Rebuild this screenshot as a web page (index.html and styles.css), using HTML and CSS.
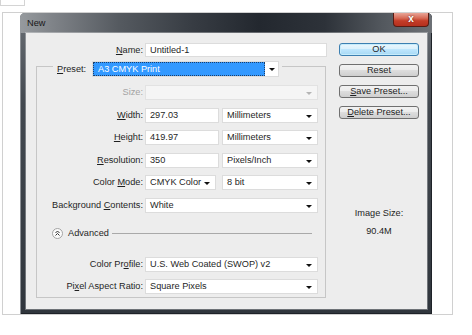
FILE: index.html
```html
<!DOCTYPE html>
<html lang="en">
<head>
    <meta charset="UTF-8">
    <title>New</title>
    <link rel="stylesheet" href="styles.css">
</head>
<body>
    <div class="stub"></div>

    <div class="frame">
        <div class="dialog">
            <div class="titlebar">
                <span class="title">New</span>
                <span class="close">x</span>
            </div>

            <div class="client">
                <div class="form">
                    <div class="name-row">
                        <label class="lbl"><u>N</u>ame:</label>
                        <div class="field">Untitled-1</div>
                    </div>

                    <div class="group">
                        <div class="legend">
                            <label class="lbl"><u>P</u>reset:</label>
                            <div class="field select preset"><span class="chosen">A3 CMYK Print</span></div>
                        </div>

                        <div class="rows">
                            <label class="lbl disabled">Size:</label>
                            <div class="field select disabled"></div>

                            <label class="lbl"><u>W</u>idth:</label>
                            <div class="pair">
                                <div class="field">297.03</div>
                                <div class="field select">Millimeters</div>
                            </div>

                            <label class="lbl"><u>H</u>eight:</label>
                            <div class="pair">
                                <div class="field">419.97</div>
                                <div class="field select">Millimeters</div>
                            </div>

                            <label class="lbl"><u>R</u>esolution:</label>
                            <div class="pair">
                                <div class="field">350</div>
                                <div class="field select">Pixels/Inch</div>
                            </div>

                            <label class="lbl">Color <u>M</u>ode:</label>
                            <div class="pair">
                                <div class="field select short">CMYK Color</div>
                                <div class="field select">8 bit</div>
                            </div>

                            <label class="lbl">Background <u>C</u>ontents:</label>
                            <div class="field select">White</div>

                            <div class="advanced">
                                <svg width="11" height="11" viewBox="0 0 11 11">
                                    <circle cx="5.5" cy="5.5" r="5" fill="#fafafa" stroke="#a3a3a3"/>
                                    <path d="M3.5 5 L5.5 3 L7.5 5 M3.5 7.5 L5.5 5.5 L7.5 7.5" fill="none" stroke="#333" stroke-width="1"/>
                                </svg>
                                <span>Advanced</span>
                                <span class="rule"></span>
                            </div>

                            <label class="lbl">Color Pr<u>o</u>file:</label>
                            <div class="field select">U.S. Web Coated (SWOP) v2</div>

                            <label class="lbl">Pi<u>x</u>el Aspect Ratio:</label>
                            <div class="field select">Square Pixels</div>
                        </div>
                    </div>
                </div>

                <div class="side">
                    <div class="btn default">OK</div>
                    <div class="btn">Reset</div>
                    <div class="btn"><u>S</u>ave Preset...</div>
                    <div class="btn"><u>D</u>elete Preset...</div>
                    <div class="info">
                        <div>Image Size:</div>
                        <div>90.4M</div>
                    </div>
                </div>
            </div>
        </div>
    </div>
</body>
</html>
```

FILE: styles.css
```css
* {
    margin: 0;
    padding: 0;
    box-sizing: border-box;
}

body {
    font-family: "Liberation Sans", Arial, sans-serif;
    font-size: 9.2px;
    color: #1f1f1f;
    background: #fff;
}

u {
    text-underline-offset: 1px;
}

.stub {
    width: 25px;
    height: 6px;
    border: 1px solid #d4d4d4;
    border-top: none;
}

.frame {
    margin: 6px 0 0 2px;
    width: 451px;
    height: 303px;
    border: 1px solid #d0d0d0;
    padding-left: 17px;
}

/* window chrome */
.dialog {
    width: 412px;
    height: 301px;
    display: flex;
    flex-direction: column;
    border-radius: 5px 5px 0 0;
    background: linear-gradient(180deg, #6a6f75 0%, #434950 30%, #30363d 100%);
    box-shadow: inset 1px 0 0 #8c9095, inset -1px 0 0 #1e2228, inset 0 -1px 0 #1e2228;
}

.titlebar {
    height: 20px;
    display: flex;
    justify-content: space-between;
    align-items: flex-start;
    border-radius: 5px 5px 0 0;
    background: linear-gradient(90deg, #969a9e 0%, #7f8388 8%, #555a60 24%, #373c43 42%, #23282f 58%, #2d3239 74%, #53585e 88%, #6d7176 100%);
}

.title {
    padding: 5px 0 0 7px;
    line-height: 10px;
    color: #161616;
}

.close {
    width: 36px;
    height: 14px;
    margin-right: 3px;
    border: 1px solid #5a1b12;
    border-top: none;
    border-radius: 0 0 4px 4px;
    background: linear-gradient(180deg, #e9a597 0%, #d66a56 40%, #c43d28 60%, #b5301e 100%);
    color: #fff;
    font-weight: bold;
    font-size: 10px;
    line-height: 12px;
    text-align: center;
    text-shadow: 0 0 2px #5a1b12;
}

.client {
    flex: 1;
    margin: 0 5px 5px 6px;
    background: #ededed;
    display: flex;
    padding-top: 10px;
    box-shadow: 0 0 0 1px rgba(255, 255, 255, 0.3);
}

/* form column */
.form {
    width: 301px;
    padding-left: 10px;
}

.lbl {
    white-space: nowrap;
    line-height: 11px;
}

.lbl.disabled {
    color: #a3a3a3;
}

.name-row {
    display: flex;
    align-items: center;
    height: 14px;
}

.name-row .lbl {
    width: 107px;
    margin-right: 2px;
    text-align: right;
}

.name-row .field {
    width: 182px;
    height: 14px;
    line-height: 12px;
}

.field {
    height: 15px;
    background: #fff;
    border: 1px solid #dcdcdc;
    line-height: 13px;
    padding-left: 4px;
    white-space: nowrap;
    position: relative;
}

.select::after {
    content: '';
    position: absolute;
    right: 5px;
    top: 6px;
    border-left: 3px solid transparent;
    border-right: 3px solid transparent;
    border-top: 3px solid #111;
}

.select.disabled {
    background: #f5f5f5;
    border-color: #e2e2e2;
}

.select.disabled::after {
    border-top-color: #b5b5b5;
}

.group {
    margin-top: 9px;
    width: 290px;
    border: 1px solid #c6c6c6;
    padding: 0 6px 3px 0;
}

.legend {
    display: flex;
    align-items: center;
    gap: 4px;
    width: fit-content;
    margin: -6px 0 0 16px;
    padding: 0 3px 0 4px;
    background: #ededed;
}

.legend .lbl {
    width: 31px;
}

.preset {
    width: 187px;
    height: 16px;
    padding: 0;
}

.preset::after {
    top: 6px;
    right: 3px;
}

.chosen {
    display: block;
    width: 172px;
    height: 14px;
    line-height: 12px;
    padding-left: 4px;
    background: #3399ff;
    color: #fff;
    border: 1px dotted #1b3f6b;
}

.rows {
    display: grid;
    grid-template-columns: 106px 173px;
    column-gap: 2px;
    row-gap: 7.5px;
    margin-top: 8px;
    align-items: center;
}

.rows .lbl {
    text-align: right;
}

.pair {
    display: grid;
    grid-template-columns: 74px 1fr;
    column-gap: 3px;
}

.pair .short {
    width: 71px;
}

.advanced {
    grid-column: 1 / -1;
    height: 29px;
    display: flex;
    align-items: center;
    gap: 5px;
    padding: 0 6px 3px 15px;
}

.advanced svg {
    flex: none;
}

.rule {
    flex: 1;
    height: 1px;
    margin-left: -2px;
    background: #a9a9a9;
}

/* buttons column */
.side {
    width: 80px;
    margin-left: 12px;
    display: flex;
    flex-direction: column;
    gap: 8px;
}

.btn {
    height: 13px;
    border: 1px solid #707070;
    border-radius: 3px;
    text-align: center;
    line-height: 11px;
    white-space: nowrap;
    background: linear-gradient(180deg, #f2f2f2 0%, #ebebeb 50%, #dddddd 50%, #cfcfcf 100%);
}

.btn.default {
    border-color: #3c7fb1;
    background: linear-gradient(180deg, #eaf6fd 0%, #d9f0fc 50%, #bee6fd 50%, #a7d9f5 100%);
    box-shadow: inset 0 0 0 1px #c7ecfb;
}

.info {
    margin-top: 77px;
    text-align: center;
    line-height: 18px;
}
```
